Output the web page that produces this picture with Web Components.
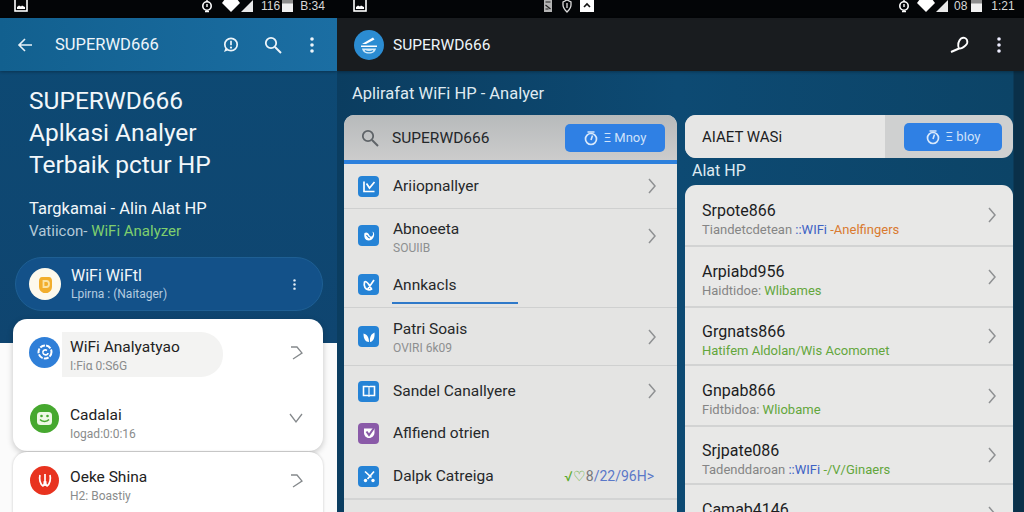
<!DOCTYPE html>
<html lang="id">
<head>
<meta charset="utf-8">
<title>SUPERWD666</title>
<style>
  html, body { margin: 0; height: 100%; overflow: hidden; background: #000; }
  body { font-family: Roboto, "Liberation Sans", sans-serif; }
</style>
</head>
<body>

<wifi-page>
  <phone-left slot="left"></phone-left>
  <phone-right slot="right"></phone-right>
</wifi-page>

<script>
const ICONS = {
  image: '<rect x="1" y="-1" width="12" height="12" fill="none" stroke="#fff" stroke-width="1.6"/><path d="M3 9V7l2-1.500 2 1 1-1 3 1.500v2z" fill="#fff"/>',
  alarm: '<circle cx="7" cy="6" r="4.200" fill="none" stroke="#fff" stroke-width="1.600"/><path d="M7 4v3M5 11.500h4M7 0v1.500" stroke="#fff" stroke-width="1.400" fill="none"/>',
  wifi: '<path d="M3 -1h12l3 4-9 9-9-9z" fill="#fff"/>',
  signal: '<path d="M12 0v12H0z" fill="#e9e9e9"/>',
  battery: '<rect x="0" y="0" width="11" height="12" fill="#f1f1f1"/><rect x="0" y="0" width="11" height="3.500" fill="#8d8d8d"/>',
  doc: '<path d="M0 0h8v12H0z" fill="#b5b5b5"/><path d="M1.500 2h5M1.500 5l5 4M1.500 9h3" stroke="#222" stroke-width="1.200"/>',
  shield: '<path d="M1 2l4-2 4 2v3c0 3-2 5-4 7-2-2-4-4-4-7z" fill="none" stroke="#ddd" stroke-width="1.300"/><path d="M5 3v5" stroke="#ddd" stroke-width="1.300"/>',
  photo: '<path d="M0 0h14v12H0z" fill="#fff"/><path d="M4 7l3-3 3 3" fill="none" stroke="#111" stroke-width="1.600"/>',
  back: '<path d="M15 8H2M8 2L2 8l6 6" fill="none" stroke="#e8f2f8" stroke-width="1.600"/>',
  bubble: '<circle cx="9" cy="8.500" r="6.200" fill="none" stroke="#eef5fa" stroke-width="1.700"/><path d="M3.500 12L2 16l4-1.800" fill="#eef5fa"/><path d="M9 4.800v4.400" stroke="#eef5fa" stroke-width="1.700"/><circle cx="9" cy="11.600" r="1.100" fill="#eef5fa"/>',
  search: '<circle cx="7" cy="7" r="5.200" fill="none" stroke="currentColor" stroke-width="1.800"/><path d="M11 11l6 6" stroke="currentColor" stroke-width="2"/>',
  dots: '<circle cx="2" cy="2" r="1.800" fill="currentColor"/><circle cx="2" cy="8" r="1.800" fill="currentColor"/><circle cx="2" cy="14" r="1.800" fill="currentColor"/>',
  key: '<path d="M1 16l8-3.500" stroke="#fff" stroke-width="2" fill="none"/><path d="M9 12.500C7.500 9 8.500 5 11 2.500c2.500-1.500 5-.5 6 1.500.8 2 .2 4-1.500 5.500-2 1.800-4.500 3.500-6.500 3z" fill="none" stroke="#fff" stroke-width="1.800"/>',
  right: '<path d="M2 1l6 7-6 7" fill="none" stroke="#8f9193" stroke-width="1.500"/>',
  upish: '<path d="M1 1h6l5 6-9 6" fill="none" stroke="#85898c" stroke-width="1.300" transform="translate(1 1)"/>',
  down: '<path d="M1 3l6 8 6-8" fill="none" stroke="#85898c" stroke-width="1.300"/>',
  timer: '<circle cx="7" cy="9" r="5.500" fill="none" stroke="#d8e8fb" stroke-width="1.700"/><path d="M3.500 2h7M8.500 5.500L7 10" stroke="#d8e8fb" stroke-width="1.600" fill="none"/>',
  logo: '<path d="M8 14l11-6.500 1.500 2L12 14z" fill="#fff"/><path d="M7 15.500h16v1.500H7z" fill="#fff"/><path d="M8 18.500h14c-.5 3-3 5-7 5s-6.500-2-7-5z" fill="#d4ecfb"/><path d="M11 20.500c2 1.500 6 1.500 8 0" stroke="#2b8cd2" stroke-width="1.200" fill="none"/>',
  coin: '<path d="M4 1h7c2 0 3 2 3 4v6c0 3-2 5-4.500 6h-4C3 16 1 14 1 11V5c0-2 1-4 3-4z" fill="#f2ae2c"/><path d="M5.500 5h3c2 0 2.500 1.500 2.500 3s-.5 3-2.500 3h-3z" fill="none" stroke="#fbe3a4" stroke-width="1.800"/>',
  swirl: '<circle cx="8" cy="8" r="6.500" fill="none" stroke="#fff" stroke-width="2" stroke-dasharray="5 1.200"/><path d="M11 9c0 2-4 3-5 0-.7-2.500 2-4 4-2.500" fill="none" stroke="#fff" stroke-width="1.600"/>',
  smile: '<rect x="1" y="1" width="15" height="13" rx="3.500" fill="#eef8e6"/><circle cx="5.500" cy="5" r="1.300" fill="#46a82f"/><circle cx="11.500" cy="5" r="1.300" fill="#46a82f"/><path d="M4 8.500c2 2.500 7 2.500 9 0" fill="none" stroke="#46a82f" stroke-width="1.500"/>',
  tulip: '<path d="M3 3c-1 4 0 9 3 11 1-1 1.500-3 1.500-5M13 3c1 4 0 9-3 11-1-1-1.500-3-1.500-5M8 2v12" fill="none" stroke="#fff" stroke-width="1.700"/>',
  tile1: '<path d="M3 3.500v10h10.500M5.500 5.500L8.500 10l5-6" fill="none" stroke="#fff" stroke-width="1.700"/>',
  tile2: '<path d="M3.500 5c2-1.500 4 0 5 2.500 1 2 3 1 3.500-1 .3-1.500-.3-2.500-1-2.800 2 0 2.500 2 2 4.300-.8 3-3 4.500-5.500 4.500-3 0-5-3-4-7.500z" fill="#fff"/><path d="M5.500 7c1 1.500 2 3 3.500 3" stroke="#2583d6" stroke-width="1.200" fill="none"/>',
  tile3: '<path d="M13 3L6.500 12.500M3.500 5c1-1 2.500 0 4 2l3 5c-2 1.500-5 1-6.500-1.500-.8-1.500-1-3.500-.5-5.500z" fill="none" stroke="#fff" stroke-width="1.700"/>',
  tile4: '<path d="M2.500 4.500C6 5.500 8 8 8 13c-3.500 0-5.500-3-5.500-8.500zM13.500 3.500C10 5 8.500 8 9 13c3.500-.5 5-4.500 4.500-9.500z" fill="#fff"/>',
  tile5: '<path d="M2.500 3.500h4.500c.6 0 1 .4 1 1 0-.6.4-1 1-1h4.500v9H9c-.6 0-1 .4-1 1 0-.6-.4-1-1-1H2.500z" fill="none" stroke="#fff" stroke-width="1.600"/><path d="M8 4.500v9" stroke="#fff" stroke-width="1.200"/>',
  tile6: '<path d="M3 3.500h10.500v4c0 3-2.500 5.500-5.500 5.500S3 10.500 3 7.500z" fill="#fff"/><path d="M5.500 6.500L8 10l5-7" fill="none" stroke="#8a5aa8" stroke-width="2"/>',
  tile7: '<path d="M4 3.500l6.500 6M13 3.500L6.500 11" fill="none" stroke="#fff" stroke-width="1.700"/><circle cx="4.500" cy="12.500" r="1.700" fill="#fff"/><circle cx="12" cy="12.500" r="1.700" fill="#fff"/>'
};

// every element below is the same thing: a shadow root filled from a template
function element(tag, html, setup) {
  const template = document.createElement('template');
  template.innerHTML = html;
  customElements.define(tag, class extends HTMLElement {
    constructor() {
      super();
      this.attachShadow({ mode: 'open' });
      this.shadowRoot.appendChild(template.content.cloneNode(true));
    }
    connectedCallback() {
      if (setup) setup(this, this.shadowRoot);
    }
  });
}

element('x-icon', `
  <style>
    :host { display: inline-flex; flex: none; line-height: 0; overflow: visible; }
    svg { overflow: visible; display: block; }
  </style>
  <svg></svg>
`, (host, root) => {
  const svg = root.querySelector('svg');
  const [w, h] = (host.getAttribute('size') || '16 16').split(' ');
  svg.setAttribute('width', w);
  svg.setAttribute('height', h);
  svg.setAttribute('viewBox', host.getAttribute('box') || `0 0 ${w} ${h}`);
  svg.innerHTML = ICONS[host.getAttribute('name')] || '';
});

element('status-bar', `
  <style>
    :host {
      display: flex;
      height: 18px;
      background: #030507;
      color: #d8d8d8;
      font: 12px/12px "Liberation Sans", sans-serif;
      overflow: hidden;
      align-items: flex-start;
    }
  </style>
  <slot></slot>
`);

element('app-bar', `
  <style>
    :host {
      display: flex;
      align-items: center;
      height: 53px;
      color: #eef5fa;
      font-size: 16.500px;
      box-sizing: border-box;
      box-shadow: 0 1px 3px rgba(0, 0, 0, .3);
      position: relative;
    }
  </style>
  <slot></slot>
`);

element('action-button', `
  <style>
    :host {
      display: flex;
      align-items: center;
      justify-content: center;
      gap: 6px;
      width: 100px;
      height: 28px;
      border-radius: 5px;
      background: #2f80e4;
      color: #cfe2fa;
      font-size: 13px;
      flex: none;
    }
  </style>
  <x-icon name="timer" size="14 16"></x-icon><slot></slot>
`);

// round badge row on the left phone
element('badge-row', `
  <style>
    :host {
      display: flex;
      align-items: center;
      height: var(--row-h, 66px);
      padding: 0 20px 0 17px;
      color: #222;
    }
    .badge {
      width: 29px;
      height: 29px;
      border-radius: 50%;
      display: flex;
      align-items: center;
      justify-content: center;
      flex: none;
    }
    :host([lit]) .badge { width: 31px; height: 31px; margin-left: -1px; }
    .text {
      flex: 1;
      margin: var(--shift, 0) 66px 0 3px;
      padding: 0 0 0 8px;
      border-radius: 0 22px 22px 0;
    }
    :host([lit]) .text { background: #f3f3f2; margin-left: 2px; margin-right: 66px; padding: 5px 0 3px 8px; }
    .title { font-size: 15.500px; line-height: 21px; white-space: nowrap; }
    .sub { font-size: 12px; line-height: 16px; color: #8a8c8c; white-space: nowrap; }
  </style>
  <div class="badge"><slot name="icon"></slot></div>
  <div class="text">
    <div class="title"><slot></slot></div>
    <div class="sub"><slot name="sub"></slot></div>
  </div>
  <slot name="end"></slot>
`, (host, root) => {
  root.querySelector('.badge').style.background = host.getAttribute('color');
});

// square tile row on the middle list
element('tile-row', `
  <style>
    :host {
      display: flex;
      align-items: center;
      height: var(--h, 45px);
      padding: 0 20px 0 14px;
      box-sizing: border-box;
      color: #26282a;
      position: relative;
    }
    :host([line]) { border-bottom: 1px solid #cfd0d0; }
    .tile {
      width: 21px;
      height: 21px;
      border-radius: 4px;
      display: flex;
      align-items: center;
      justify-content: center;
      flex: none;
    }
    .text { flex: 1; margin-left: 14px; }
    .title { font-size: 15.500px; line-height: 20px; white-space: nowrap; }
    .sub { font-size: 12px; line-height: 15px; color: #8d8f90; margin-top: 2px; white-space: nowrap; }
  </style>
  <div class="tile"><slot name="icon"></slot></div>
  <div class="text">
    <div class="title"><slot></slot></div>
    <div class="sub"><slot name="sub"></slot></div>
  </div>
  <slot name="end"></slot>
`, (host, root) => {
  host.style.setProperty('--h', (host.getAttribute('h') || 45) + 'px');
  root.querySelector('.tile').style.background = host.getAttribute('color') || '#2583d6';
  root.querySelector('.text').style.paddingTop = (host.getAttribute('drop') || 0) + 'px';
  if (!host.querySelector('[slot=sub]')) root.querySelector('.sub').style.display = 'none';
});

// plain text row on the right list
element('text-row', `
  <style>
    :host {
      display: flex;
      align-items: center;
      box-sizing: border-box;
      padding: 0 16px 0 17px;
      border-bottom: 2px solid #d2d3d3;
      color: #1c1d1f;
    }
    .text { flex: 1; padding-top: 8px; }
    .title { font-size: 16px; line-height: 20px; white-space: nowrap; }
    .sub { font-size: 13px; line-height: 17px; margin-top: 0; color: #858585; white-space: nowrap; }
  </style>
  <div class="text">
    <div class="title"><slot></slot></div>
    <div class="sub"><slot name="sub"></slot></div>
  </div>
  <x-icon name="right" size="10 16"></x-icon>
`, (host) => {
  host.style.height = (host.getAttribute('h') || 60) + 'px';
});

element('phone-left', `
  <style>
    :host {
      display: block;
      height: 512px;
      overflow: hidden;
      background: linear-gradient(#0d4a74, #0f4570 343px, #fbfbfb 343px);
      color: #f2f7fa;
    }
    app-bar { background: linear-gradient(90deg, #12608f, #1b6ea3); padding: 0 23px 0 17px; }
    .name { margin-left: 22px; flex: 1; }
    .hero { padding: 14px 0 0 29px; height: 172px; box-sizing: border-box; }
    h1 { margin: 0; font-size: 24.500px; line-height: 32px; font-weight: 400; }
    p { margin: 0; line-height: 22px; white-space: nowrap; }
    .tag { margin-top: 17px; font-size: 16.500px; }
    .ver { font-size: 15px; color: #b4cad8; }
    .ver b { font-weight: 400; color: #7fcf6e; }
    .pill {
      display: flex;
      align-items: center;
      box-sizing: border-box;
      margin: 14px 14px 0 15px;
      height: 54px;
      border-radius: 27px;
      background: #135189;
      border: 1px solid #1e5f94;
      padding: 0 26px 0 13px;
    }
    .avatar {
      width: 32px;
      height: 32px;
      border-radius: 50%;
      background: #fdf9ec;
      display: flex;
      align-items: center;
      justify-content: center;
    }
    .pill-text { flex: 1; margin-left: 10px; }
    .pill-title { font-size: 16px; line-height: 20px; }
    .pill-sub { font-size: 12px; line-height: 17px; color: #b5cce0; }
    .card {
      margin: 8px 14px 0 13px;
      background: #fff;
      border-radius: 14px;
      box-shadow: 0 2px 6px rgba(0, 0, 0, .22);
    }
    .card + .card { margin-top: 1px; height: 90px; border-radius: 14px 14px 0 0; --row-h: 56px; box-shadow: 0 0 3px rgba(0, 0, 0, .2); }
  </style>
  <status-bar>
    <x-icon name="image" size="14 14" style="margin-left:14px"></x-icon>
    <x-icon name="alarm" size="14 14" style="margin-left:172px"></x-icon>
    <x-icon name="wifi" size="18 12" style="margin-left:8px"></x-icon>
    <x-icon name="signal" size="12 12" style="margin-left:1px"></x-icon>
    <span style="margin-left:8px">116</span>
    <x-icon name="battery" size="11 12" style="margin-left:2px"></x-icon>
    <span style="margin-left:7px">B:34</span>
  </status-bar>
  <app-bar>
    <x-icon name="back" size="16 16"></x-icon>
    <span class="name">SUPERWD666</span>
    <x-icon name="bubble" size="18 18"></x-icon>
    <x-icon name="search" size="18 18" style="margin-left:24px;color:#eef5fa"></x-icon>
    <x-icon name="dots" size="4 16" style="margin-left:28px;color:#eef5fa"></x-icon>
  </app-bar>
  <div class="hero">
    <h1>SUPERWD666<br>Aplkasi Analyer<br>Terbaik pctur HP</h1>
    <p class="tag">Targkamai - Alin Alat HP</p>
    <p class="ver">Vatiicon- <b>WiFi Analyzer</b></p>
  </div>
  <div class="pill">
    <div class="avatar"><x-icon name="coin" size="15 17"></x-icon></div>
    <div class="pill-text">
      <div class="pill-title">WiFi WiFtl</div>
      <div class="pill-sub">Lpirna : (Naitager)</div>
    </div>
    <x-icon name="dots" size="3 11" box="0 0 4 16" style="color:#e4eef6"></x-icon>
  </div>
  <div class="card">
    <badge-row color="#2f7fd8" lit style="--shift:4px">
      <x-icon slot="icon" name="swirl" size="16 16"></x-icon>
      WiFi Analyatyao
      <span slot="sub">I:Fiα 0:S6G</span>
      <x-icon slot="end" name="upish" size="14 14"></x-icon>
    </badge-row>
    <badge-row color="#46a82f" style="--shift:11px">
      <x-icon slot="icon" name="smile" size="17 15"></x-icon>
      Cadalai
      <span slot="sub">Iogad:0:0:16</span>
      <x-icon slot="end" name="down" size="14 14"></x-icon>
    </badge-row>
  </div>
  <div class="card">
    <badge-row color="#e8331f" style="--shift:10px">
      <x-icon slot="icon" name="tulip" size="16 16"></x-icon>
      Oeke Shina
      <span slot="sub">H2: Boastiy</span>
      <x-icon slot="end" name="upish" size="14 14"></x-icon>
    </badge-row>
  </div>
`);

element('phone-right', `
  <style>
    :host {
      display: block;
      height: 512px;
      overflow: hidden;
      background: linear-gradient(90deg, #0b3d60 0, #0d4a73 340px, #0c4467 676px, #0a3049 677px);
      color: #eef5fa;
    }
    app-bar { background: #191c1f; padding: 0 23px 0 17px; }
    .logo { width: 30px; height: 30px; border-radius: 50%; background: #2b8cd2; }
    .name { margin-left: 9px; flex: 1; font-size: 15.500px; }
    .lead { padding: 12px 0 0 15px; font-size: 16.500px; line-height: 22px; color: #dfeaf1; height: 32px; white-space: nowrap; }
    .cols { display: grid; grid-template-columns: 333px 328px; gap: 8px; padding-left: 7px; }
    .list { border-radius: 10px 10px 0 0; overflow: hidden; background: #e4e4e3; }
    .head {
      display: flex;
      align-items: center;
      height: 49px;
      box-sizing: border-box;
      padding: 0 12px 0 17px;
      background: linear-gradient(#b7babb, #cccccc);
      border-bottom: 4px solid #2d80dc;
      color: #24272a;
      font-size: 15.500px;
    }
    .head span { flex: 1; margin-left: 13px; }
    .under { position: absolute; left: 48px; bottom: 3px; width: 126px; height: 2px; background: #2f79c9; }
    .date { font-size: 14px; color: #5a78c8; white-space: nowrap; margin-right: 3px; }
    .date b { font-weight: 400; color: #5cab2e; }
    .date i { font-style: normal; color: #777; }
    .end { height: 20px; border-top: 2px solid #d3d4d4; }
    .filter {
      display: flex;
      align-items: center;
      height: 43px;
      border-radius: 11px;
      padding-right: 11px;
      background: #cfd0d0;
      overflow: hidden;
    }
    .filter span {
      align-self: stretch;
      display: flex;
      align-items: center;
      width: 183px;
      padding-left: 17px;
      background: #e6e6e5;
      color: #1c1d1f;
      font-size: 15px;
      margin-right: 19px;
      flex: none;
    }
    .filter action-button { width: 98px; }
    .label { height: 27px; line-height: 25px; padding-left: 7px; font-size: 16px; color: #dfeaf1; }
    .plain { background: #e8e8e7; border-radius: 11px 11px 0 0; height: 327px; overflow: hidden; }
    .blue { color: #3d62c4; }
    .orange { color: #d97a30; }
    .green { color: #63a63c; }
  </style>
  <status-bar>
    <x-icon name="image" size="14 14" style="margin-left:16px"></x-icon>
    <x-icon name="doc" size="8 12" style="margin-left:177px"></x-icon>
    <x-icon name="shield" size="10 12" style="margin-left:10px"></x-icon>
    <x-icon name="photo" size="14 12" style="margin-left:8px"></x-icon>
    <x-icon name="alarm" size="14 14" style="margin-left:303px"></x-icon>
    <x-icon name="wifi" size="18 12" style="margin-left:6px"></x-icon>
    <x-icon name="signal" size="12 12" style="margin-left:1px"></x-icon>
    <span style="margin-left:6px">08</span>
    <x-icon name="battery" size="11 12" style="margin-left:4px"></x-icon>
    <span style="margin-left:9px">1:21</span>
  </status-bar>
  <app-bar>
    <div class="logo"><x-icon name="logo" size="30 30"></x-icon></div>
    <span class="name">SUPERWD666</span>
    <x-icon name="key" size="18 18"></x-icon>
    <x-icon name="dots" size="4 16" style="margin-left:29px;color:#eef"></x-icon>
  </app-bar>
  <div class="lead">Aplirafat WiFi HP - Analyer</div>
  <div class="cols">
    <div class="list">
      <div class="head">
        <x-icon name="search" size="18 18" style="color:#5f6468"></x-icon>
        <span>SUPERWD666</span>
        <action-button>Ξ Mnoy</action-button>
      </div>
      <tile-row line h="45"><x-icon slot="icon" name="tile1" size="16 16"></x-icon>Ariiopnallyer<x-icon slot="end" name="right" size="10 16"></x-icon></tile-row>
      <tile-row h="53" drop="4"><x-icon slot="icon" name="tile2" size="16 16"></x-icon>Abnoeeta<span slot="sub">SOUIIB</span><x-icon slot="end" name="right" size="10 16"></x-icon></tile-row>
      <tile-row line h="46"><x-icon slot="icon" name="tile3" size="16 16"></x-icon>Annkacls<div class="under"></div></tile-row>
      <tile-row line h="58" drop="2"><x-icon slot="icon" name="tile4" size="16 16"></x-icon>Patri Soais<span slot="sub">OVIRI 6k09</span><x-icon slot="end" name="right" size="10 16"></x-icon></tile-row>
      <tile-row h="46" style="padding-top:4px"><x-icon slot="icon" name="tile5" size="16 16"></x-icon>Sandel Canallyere<x-icon slot="end" name="right" size="10 16"></x-icon></tile-row>
      <tile-row h="42" color="#8a5aa8"><x-icon slot="icon" name="tile6" size="16 16"></x-icon>Aflfiend otrien</tile-row>
      <tile-row h="44"><x-icon slot="icon" name="tile7" size="16 16"></x-icon>Dalpk Catreiga<span class="date" slot="end"><b>√♡</b><i>8</i>/22/96H&gt;</span></tile-row>
      <div class="end"></div>
    </div>
    <div>
      <div class="filter"><span>AIAET WASi</span><action-button>Ξ bIoy</action-button></div>
      <div class="label">Alat HP</div>
      <div class="plain">
        <text-row h="62">Srpote866<span slot="sub">Tiandetcdetean <span class="blue">::WIFi</span> <span class="orange">-Anelfingers</span></span></text-row>
        <text-row h="61">Arpiabd956<span slot="sub">Haidtidoe: <span class="green">Wlibames</span></span></text-row>
        <text-row h="58">Grgnats866<span slot="sub"><span class="green">Hatifem Aldolan/Wis Acomomet</span></span></text-row>
        <text-row h="61">Gnpab866<span slot="sub">Fidtbidoa: <span class="green">Wliobame</span></span></text-row>
        <text-row h="58">Srjpate086<span slot="sub">Tadenddaroan <span class="blue">::WIFi</span> <span class="green">-/V/Ginaers</span></span></text-row>
        <text-row h="60">Camab4146<span slot="sub">&nbsp;</span></text-row>
      </div>
    </div>
  </div>
`);

element('wifi-page', `
  <style>
    :host {
      display: grid;
      grid-template-columns: 337px 687px;
      width: 1024px;
      height: 512px;
      overflow: hidden;
    }
  </style>
  <slot name="left"></slot>
  <slot name="right"></slot>
`);
</script>
</body>
</html>
